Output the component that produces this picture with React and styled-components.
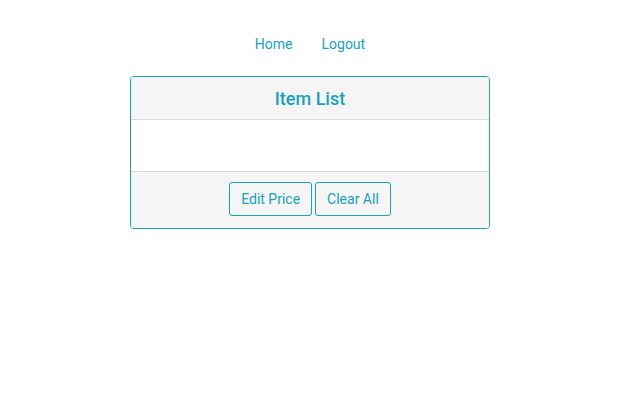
import React from "react";
import styled, { createGlobalStyle } from "styled-components";

const GlobalStyle = createGlobalStyle`
  body {
    margin: 0;
    background: #fff;
    font-family: Roboto, "Liberation Sans", sans-serif;
  }
`;

const Page = styled.div`
  width: 620px;
  padding-top: 34px;
  display: flex;
  flex-direction: column;
  align-items: center;
`;

const Nav = styled.nav`
  display: flex;
  gap: 29px;
  height: 20px;
  align-items: center;
`;

const NavLink = styled.a`
  color: #17a2b8;
  font-size: 14px;
  text-decoration: none;
  cursor: pointer;
`;

const Card = styled.div`
  margin-top: 22px;
  width: 358px;
  border: 1px solid #17a2b8;
  border-radius: 4px;
  overflow: hidden;
`;

const Header = styled.div`
  height: 42px;
  background: #f5f5f5;
  border-bottom: 1px solid #dadada;
  display: flex;
  align-items: center;
  justify-content: center;
  color: #17a2b8;
  font-size: 18px;
  font-weight: 500;
`;

const Body = styled.div`
  height: 51px;
  border-bottom: 1px solid #dadada;
`;

const Footer = styled.div`
  height: 56px;
  box-sizing: border-box;
  padding-bottom: 2px;
  background: #f5f5f5;
  display: flex;
  align-items: center;
  justify-content: center;
  gap: 3px;
`;

const Button = styled.button`
  height: 34px;
  padding: 0 11px;
  background: transparent;
  border: 1px solid #17a2b8;
  border-radius: 3px;
  color: #17a2b8;
  font-family: inherit;
  font-size: 14px;
  cursor: pointer;
`;

export default function App() {
  return (
    <>
      <GlobalStyle />
      <Page>
        <Nav>
          <NavLink>Home</NavLink>
          <NavLink>Logout</NavLink>
        </Nav>
        <Card>
          <Header>Item List</Header>
          <Body />
          <Footer>
            <Button>Edit Price</Button>
            <Button>Clear All</Button>
          </Footer>
        </Card>
      </Page>
    </>
  );
}
